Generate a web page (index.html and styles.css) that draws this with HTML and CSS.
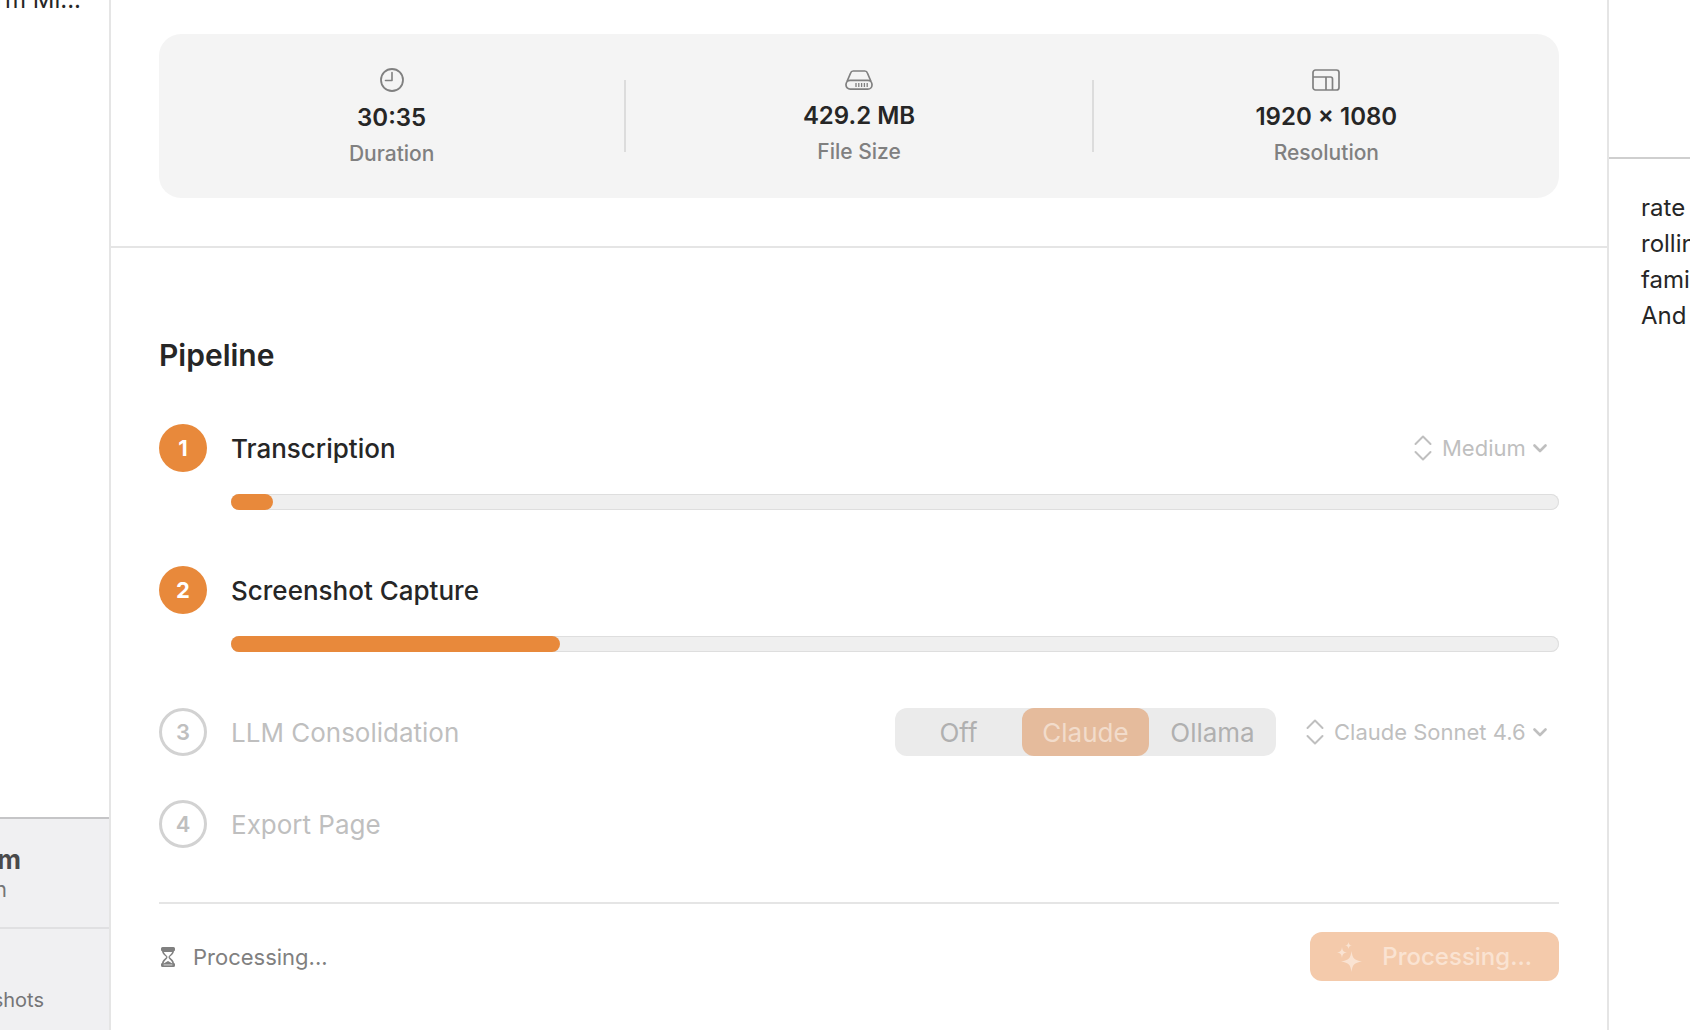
FILE: index.html
```html
<!DOCTYPE html>
<html lang="en">
<head>
    <meta charset="utf-8">
    <title>Pipeline</title>
    <link rel="stylesheet" href="styles.css">
</head>
<body>
    <div class="app">
        <aside class="sidebar">
            <div class="list">
                <div class="list-item">rm Mi...</div>
            </div>
            <div class="sidebar-footer">
                <div class="source">
                    <strong class="source-name">m</strong>
                    <span class="source-detail">n</span>
                </div>
                <div class="shots">shots</div>
            </div>
        </aside>

        <main class="main">
            <section class="info">
                <div class="stats">
                    <div class="stat">
                        <svg width="24" height="24" viewBox="0 0 24 24" fill="none" stroke="currentColor" stroke-width="1.8" stroke-linecap="round" stroke-linejoin="round">
                            <circle cx="12" cy="12" r="11"/>
                            <path d="M12 4.500V12.500H5.500" stroke-width="1.600"/>
                        </svg>
                        <span class="stat-value">30:35</span>
                        <span class="stat-label">Duration</span>
                    </div>
                    <div class="stat">
                        <svg width="28" height="20" viewBox="0 0 28 20" fill="none" stroke="currentColor" stroke-width="1.7">
                            <path d="M2 11.5L5.6 3C6 1.6 6.8 1 8.2 1H19.8C21.2 1 22 1.6 22.4 3L26 11.5"/>
                            <rect x="1" y="10.3" width="26" height="8.8" rx="4.2"/>
                            <path d="M11 13V17M13.8 13V17M16.6 13V17M19.4 13V17M22.2 13V17" stroke-width="1.3"/>
                        </svg>
                        <span class="stat-value">429.2 MB</span>
                        <span class="stat-label">File Size</span>
                    </div>
                    <div class="stat">
                        <svg width="28" height="22" viewBox="0 0 28 22" fill="none" stroke="currentColor" stroke-width="1.7">
                            <rect x="1" y="1" width="26" height="20" rx="2.5"/>
                            <path d="M1 8H18.5Q20.5 8 20.5 10V21M14 8V21"/>
                        </svg>
                        <span class="stat-value">1920 × 1080</span>
                        <span class="stat-label">Resolution</span>
                    </div>
                </div>
            </section>

            <section class="pipeline">
                <h2>Pipeline</h2>

                <div class="steps">
                    <div class="step active">
                        <div class="step-row">
                            <span class="step-number">1</span>
                            <span class="step-title">Transcription</span>
                            <div class="picker">
                                <svg width="18" height="26" viewBox="0 0 18 26" fill="none" stroke="currentColor" stroke-width="2" stroke-linecap="round" stroke-linejoin="round">
                                    <path d="M1.5 9L9 1.5L16.5 9M1.5 17L9 24.5L16.5 17"/>
                                </svg>
                                <select aria-label="Transcription model" disabled>
                                    <option>Medium</option>
                                </select>
                                <svg width="14" height="10" viewBox="0 0 14 10" fill="none" stroke="currentColor" stroke-width="2.6" stroke-linecap="round" stroke-linejoin="round">
                                    <path d="M1.500 2.500L7 8L12.500 2.500"/>
                                </svg>
                            </div>
                        </div>
                        <div class="progress" role="progressbar" aria-label="Transcription" aria-valuenow="3">
                            <div class="progress-fill" style="width: 3.2%"></div>
                        </div>
                    </div>

                    <div class="step active">
                        <div class="step-row">
                            <span class="step-number">2</span>
                            <span class="step-title">Screenshot Capture</span>
                        </div>
                        <div class="progress" role="progressbar" aria-label="Screenshot Capture" aria-valuenow="25">
                            <div class="progress-fill" style="width: 24.8%"></div>
                        </div>
                    </div>

                    <div class="step">
                        <div class="step-row">
                            <span class="step-number">3</span>
                            <span class="step-title">LLM Consolidation</span>
                            <div class="segmented" role="radiogroup" aria-label="Provider">
                                <input type="radio" name="provider" id="provider-off" disabled>
                                <label for="provider-off">Off</label>
                                <input type="radio" name="provider" id="provider-claude" checked disabled>
                                <label for="provider-claude">Claude</label>
                                <input type="radio" name="provider" id="provider-ollama" disabled>
                                <label for="provider-ollama">Ollama</label>
                            </div>
                            <div class="picker">
                                <svg width="18" height="26" viewBox="0 0 18 26" fill="none" stroke="currentColor" stroke-width="2" stroke-linecap="round" stroke-linejoin="round">
                                    <path d="M1.5 9L9 1.5L16.5 9M1.5 17L9 24.5L16.5 17"/>
                                </svg>
                                <select aria-label="LLM model" disabled>
                                    <option>Claude Sonnet 4.6</option>
                                </select>
                                <svg width="14" height="10" viewBox="0 0 14 10" fill="none" stroke="currentColor" stroke-width="2.6" stroke-linecap="round" stroke-linejoin="round">
                                    <path d="M1.500 2.500L7 8L12.500 2.500"/>
                                </svg>
                            </div>
                        </div>
                    </div>

                    <div class="step">
                        <div class="step-row">
                            <span class="step-number">4</span>
                            <span class="step-title">Export Page</span>
                        </div>
                    </div>
                </div>

                <div class="actions">
                    <div class="status">
                        <svg width="14" height="20" viewBox="0 0 14 20" fill="currentColor">
                            <path d="M1.5 0H12.5Q14 0 14 1.5V3Q14 4 13 4.2C12.8 7 10.5 8 8.6 10C10.5 12 12.8 13.5 13 16Q14 16.3 14 17V18.5Q14 20 12.5 20H1.5Q0 20 0 18.5V17Q0 16.3 1 16C1.2 13.5 3.5 12 5.4 10C3.5 8 1.2 7 1 4.2Q0 4 0 3V1.5Q0 0 1.5 0Z"/>
                            <path fill="#fff" d="M2.8 5H11.2C10.5 7 8.5 8 7.6 9.6V11C8.8 12.5 11 14 11.4 16.5L7 14L2.6 16.5C3 14 5.2 12.5 6.4 11V9.6C5.5 8 3.5 7 2.8 5Z"/>
                            <path fill="#fff" d="M2.6 17.6H11.4V18.3H2.6Z"/>
                        </svg>
                        <span>Processing...</span>
                    </div>
                    <button class="run" type="button" disabled>
                        <svg width="25" height="30" viewBox="0 0 25 30" fill="currentColor">
                            <path d="M14.5 9C15.5 16.5 17 18 25 19.5C17 21 15.5 22.5 14.5 30C13.500 22.500 12 21 4 19.500C12 18 13.500 16.500 14.500 9Z"/>
                            <path d="M5 5C5.5 9 6.5 10 10 10.5C6.5 11 5.5 12 5 16C4.5 12 3.5 11 0 10.5C3.5 10 4.5 9 5 5Z"/>
                            <path d="M11.5 0C11.9 2.5 12.5 3.1 15 3.5C12.5 3.9 11.9 4.5 11.5 7C11.1 4.5 10.5 3.9 8 3.5C10.5 3.1 11.1 2.5 11.5 0Z"/>
                        </svg>
                        <span>Processing...</span>
                    </button>
                </div>
            </section>
        </main>

        <aside class="transcript">
            <div class="transcript-head"></div>
            <p class="transcript-text">rate<br>rolling<br>family<br>And</p>
        </aside>
    </div>
</body>
</html>
```
FILE: styles.css
```css
* {
    box-sizing: border-box;
}
body {
    margin: 0;
    font-family: Inter, "Liberation Sans", sans-serif;
    font-size: 24px;
    color: #262626;
    background: #fff;
}
svg {
    display: block;
    flex: none;
}
.app {
    display: grid;
    grid-template-columns: 111px minmax(0, 1fr) 83px;
    height: 100vh;
    overflow: hidden;
}

/* Sidebar */
.sidebar {
    display: flex;
    flex-direction: column;
    justify-content: space-between;
    border-right: 2px solid #e5e5e5;
    overflow: hidden;
    white-space: nowrap;
}
.list-item {
    display: flex;
    justify-content: flex-end;
    margin-top: -16px;
    padding-right: 28px;
    line-height: 32px;
}
.sidebar-footer {
    background: #f0f0f2;
    border-top: 2px solid #c5c5c7;
    color: #757577;
}
.source {
    display: flex;
    flex-direction: column;
    align-items: flex-end;
    height: 110px;
    padding: 25px 88px 0 0;
    border-bottom: 2px solid #e0e0e2;
}
.source-name {
    font-size: 26px;
    line-height: 32px;
    color: #4a4a4b;
}
.source-detail {
    margin-right: 14px;
    font-size: 21px;
    line-height: 28px;
}
.shots {
    display: flex;
    justify-content: flex-end;
    padding: 58px 65px 17px 0;
    font-size: 20px;
    line-height: 26px;
}

/* File info */
.info {
    padding: 34px 48px 48px;
    border-bottom: 2px solid #e5e5e5;
}
.stats {
    display: flex;
    align-items: center;
    height: 164px;
    border-radius: 22px;
    background: #f4f4f4;
}
.stat {
    flex: 1;
    display: flex;
    flex-direction: column;
    align-items: center;
    justify-content: center;
    gap: 10px;
    height: 72px;
    color: #808080;
}
.stat + .stat {
    border-left: 2px solid #dcdcdc;
}
.stat-value {
    font-weight: 600;
    line-height: 32px;
    color: #262626;
}
.stat-label {
    font-size: 21px;
    font-weight: 500;
    line-height: 20px;
}

/* Pipeline */
.pipeline {
    padding: 88px 48px 48px;
}
h2 {
    margin: 0 0 50px;
    font-size: 30px;
    font-weight: 600;
    line-height: 38px;
}
.steps {
    display: flex;
    flex-direction: column;
    gap: 44px;
}
.step {
    color: #bfbfbf;
}
.step.active {
    padding-bottom: 12px;
}
.step-row {
    display: flex;
    align-items: center;
    height: 48px;
}
.step-number {
    display: flex;
    align-items: center;
    justify-content: center;
    width: 48px;
    height: 48px;
    margin-right: 24px;
    border: 3px solid #d2d2d2;
    border-radius: 50%;
    font-size: 22px;
    font-weight: 600;
}
.step-title {
    margin-right: auto;
    font-size: 26px;
}
.active .step-number {
    border: none;
    background: #e8893b;
    color: #fff;
    font-weight: 700;
}
.active .step-title {
    color: #262626;
    font-weight: 500;
}
.progress {
    height: 16px;
    margin: 22px 0 0 72px;
    border-radius: 8px;
    background: #efefef;
    box-shadow: inset 0 0 0 1px #dedede;
}
.progress-fill {
    height: 100%;
    border-radius: 8px;
    background: #e8893b;
}
.picker {
    display: flex;
    align-items: center;
    margin: 0 12px 0 30px;
    color: #bfbfbf;
}
.picker select {
    appearance: none;
    margin: 0 7px 0 10px;
    padding: 0;
    border: none;
    background: none;
    color: inherit;
    opacity: 1;
    font-family: inherit;
    font-size: 22px;
}
.segmented {
    display: flex;
    height: 48px;
    border-radius: 12px;
    background: #ebebeb;
    color: #b0b0b0;
    font-size: 26px;
}
.segmented input {
    position: absolute;
    opacity: 0;
}
.segmented label {
    display: flex;
    align-items: center;
    justify-content: center;
    min-width: 127px;
    border-radius: 12px;
}
.segmented input:checked + label {
    background: #e5bb9c;
    color: #f2dccb;
}

/* Actions */
.actions {
    display: flex;
    align-items: center;
    justify-content: space-between;
    margin-top: 54px;
    padding-top: 28px;
    border-top: 2px solid #e5e5e5;
}
.status {
    display: flex;
    align-items: center;
    gap: 18px;
    padding-left: 2px;
    font-size: 22px;
    color: #808080;
}
.run {
    display: flex;
    align-items: center;
    gap: 20px;
    height: 49px;
    padding: 0 27px;
    border: none;
    border-radius: 12px;
    background: #f4caab;
    color: #fae3d2;
    font-family: inherit;
    font-size: 24px;
    font-weight: 500;
}

/* Transcript */
.transcript {
    border-left: 2px solid #e5e5e5;
    overflow: hidden;
}
.transcript-head {
    height: 159px;
    border-bottom: 2px solid #cfcfcf;
}
.transcript-text {
    margin: 0;
    padding: 31px 0 0 32px;
    line-height: 36px;
    white-space: nowrap;
}
```
